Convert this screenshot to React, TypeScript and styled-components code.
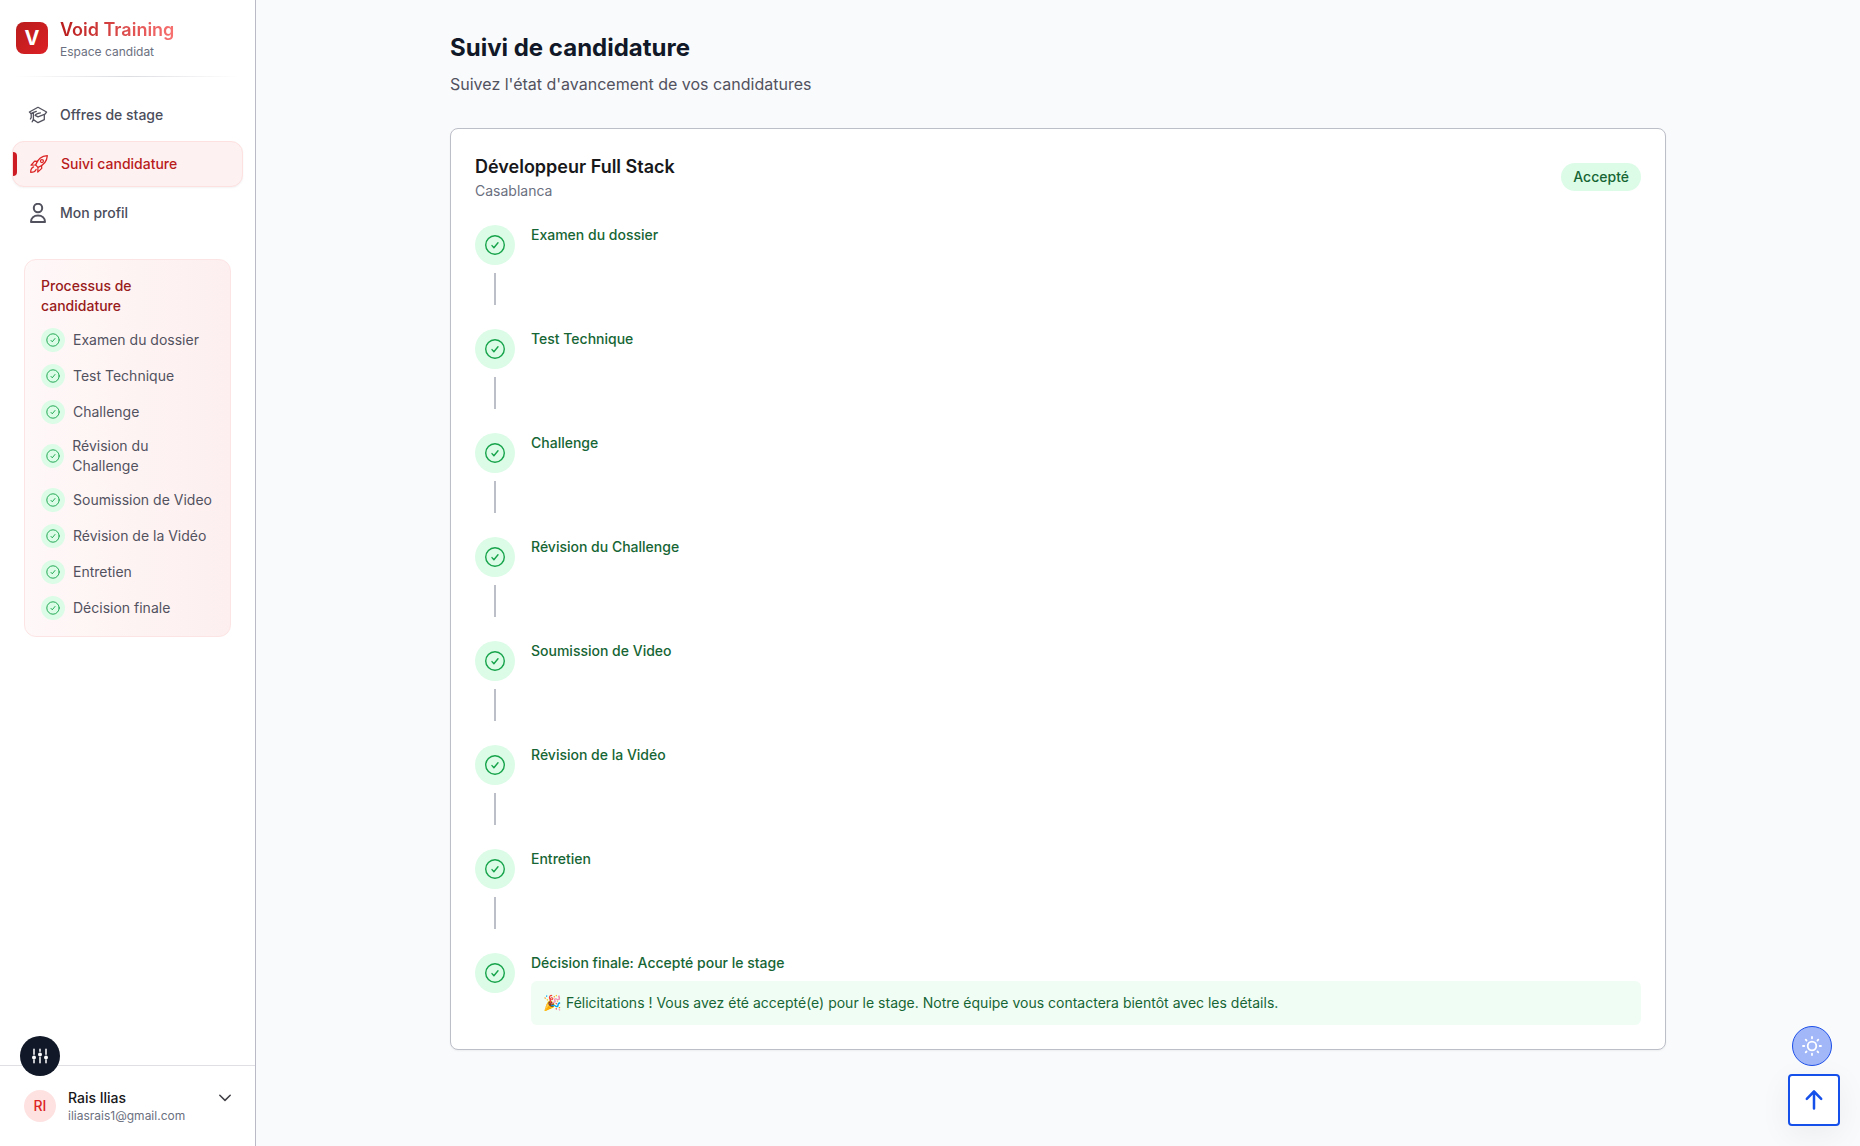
import React from "react";
import styled, { createGlobalStyle } from "styled-components";

const GlobalStyle = createGlobalStyle`
  *, *::before, *::after { box-sizing: border-box; }
  body {
    margin: 0;
    background: #f9fafb;
    color: #18181b;
    font-family: Inter, "Noto Sans", sans-serif;
    font-size: 14px;
    line-height: 20px;
  }
  h1, h2, h3, p, ul, ol { margin: 0; padding: 0; }
  ul, ol { list-style: none; }
  button { font: inherit; color: inherit; cursor: pointer; }
  svg { display: block; flex: none; }
`;

const Layout = styled.div`
  display: flex;
  min-height: 100vh;
`;

const Sidebar = styled.aside`
  display: flex;
  flex-direction: column;
  flex: none;
  width: 256px;
  height: 100vh;
  position: sticky;
  top: 0;
  background: #fff;
  border-right: 1px solid #b9bac6;
`;

const Brand = styled.header`
  display: flex;
  align-items: center;
  gap: 12px;
  height: 76px;
  padding: 0 16px;
`;

const BrandMark = styled.span`
  display: grid;
  place-items: center;
  width: 32px;
  height: 32px;
  border-radius: 8px;
  background: linear-gradient(135deg, #b91c1c, #dc2026);
  color: #fff;
  font-size: 20px;
  font-weight: 700;
`;

const BrandName = styled.p`
  width: max-content;
  font-size: 18px;
  line-height: 28px;
  font-weight: 600;
  color: transparent;
  background: linear-gradient(90deg, #b91c1c, #f87171);
  background-clip: text;
  -webkit-background-clip: text;
`;

const BrandSub = styled.p`
  font-size: 12px;
  line-height: 16px;
  color: #6b7080;
`;

const Divider = styled.hr`
  height: 1px;
  margin: 0 16px;
  border: 0;
  background: linear-gradient(90deg, transparent, #dcdde1, transparent);
`;

const Nav = styled.nav`
  display: flex;
  flex-direction: column;
  gap: 4px;
  padding: 16px 12px 0;
`;

const NavLink = styled.a<{ $active?: boolean }>`
  position: relative;
  display: flex;
  align-items: center;
  gap: 12px;
  height: ${(p) => (p.$active ? 46 : 44)}px;
  padding: 0 16px;
  border: ${(p) => (p.$active ? "1px solid #fde0e0" : "0")};
  border-radius: 12px;
  background: ${(p) => (p.$active ? "#fef1f1" : "transparent")};
  box-shadow: ${(p) => (p.$active ? "0 1px 2px rgba(0, 0, 0, 0.05)" : "none")};
  color: ${(p) => (p.$active ? "#b91c1c" : "#4b4d5b")};
  font-weight: 500;
  text-decoration: none;
  svg { color: ${(p) => (p.$active ? "#dc2626" : "#52525f")}; }
  &::before {
    content: ${(p) => (p.$active ? '""' : "none")};
    position: absolute;
    left: 0;
    width: 4px;
    height: 24px;
    border-radius: 0 4px 4px 0;
    background: #ce1c25;
  }
`;

const Process = styled.section`
  margin: 24px 24px 0;
  padding: 16px;
  border: 1px solid #fde4e4;
  border-radius: 12px;
  background: linear-gradient(90deg, #fff8f8, #fdefef);
`;

const ProcessTitle = styled.h3`
  max-width: 140px;
  margin-bottom: 12px;
  font-size: 14px;
  line-height: 20px;
  font-weight: 500;
  color: #991b1b;
`;

const ProcessList = styled.ul`
  display: flex;
  flex-direction: column;
  gap: 12px;
`;

const ProcessItem = styled.li`
  display: flex;
  align-items: center;
  gap: 8px;
  color: #52525f;
`;

const CheckDisc = styled.span<{ $size: number }>`
  display: grid;
  place-items: center;
  flex: 0 1 auto;
  width: ${(p) => p.$size}px;
  height: ${(p) => p.$size}px;
  border-radius: 50%;
  background: #dcfce7;
  color: #16a34a;
`;

const Account = styled.button`
  display: flex;
  align-items: flex-start;
  gap: 12px;
  margin-top: auto;
  padding: 16px 24px;
  border: 0;
  border-top: 1px solid #dfdfe4;
  background: transparent;
  text-align: left;
`;

const Avatar = styled.span`
  display: grid;
  place-items: center;
  width: 32px;
  height: 32px;
  margin-top: 8px;
  border-radius: 50%;
  background: #fee2e2;
  color: #dc2626;
  font-weight: 500;
`;

const AccountText = styled.span`
  display: flex;
  flex: 1;
  flex-direction: column;
  padding: 6px 0;
`;

const AccountName = styled.span`
  font-weight: 500;
  color: #18181b;
`;

const AccountMail = styled.span`
  font-size: 12px;
  line-height: 16px;
  color: #6b7080;
`;

const Chevron = styled.span`
  padding-top: 10px;
  color: #3f3f46;
`;

const Main = styled.main`
  flex: 1;
  padding: 32px 24px;
`;

const Content = styled.div`
  max-width: 1216px;
  margin: 0 auto;
`;

const PageTitle = styled.h1`
  font-size: 24px;
  line-height: 32px;
  font-weight: 700;
  color: #111827;
`;

const PageLead = styled.p`
  margin: 8px 0 32px;
  font-size: 16px;
  line-height: 24px;
  color: #52525f;
`;

const Card = styled.article`
  padding: 24px;
  border: 1px solid #bcbec8;
  border-radius: 8px;
  background: #fff;
  box-shadow: 0 1px 2px rgba(0, 0, 0, 0.05);
`;

const CardHead = styled.header`
  display: flex;
  align-items: center;
  justify-content: space-between;
  margin-bottom: 24px;
`;

const JobTitle = styled.h2`
  font-size: 18px;
  line-height: 28px;
  font-weight: 600;
  color: #18181b;
`;

const JobPlace = styled.p`
  color: #6b7080;
`;

const Status = styled.span`
  padding: 4px 12px;
  border-radius: 14px;
  background: #dcfce7;
  color: #166534;
  font-weight: 500;
`;

const Timeline = styled.ol`
  display: flex;
  flex-direction: column;
  gap: 24px;
`;

const Step = styled.li`
  display: flex;
  gap: 16px;
`;

const StepRail = styled.div`
  display: flex;
  flex-direction: column;
  align-items: center;
  gap: 8px;
`;

const StepLine = styled.span`
  width: 2px;
  height: 32px;
  background: #bcbec8;
`;

const StepBody = styled.div`
  flex: 1;
`;

const StepTitle = styled.h3`
  font-size: 14px;
  line-height: 20px;
  font-weight: 500;
  color: #166534;
`;

const Notice = styled.p`
  margin-top: 8px;
  padding: 12px;
  border-radius: 6px;
  background: #f0fdf4;
  color: #166534;
`;

const Emoji = styled.span`
  font-size: 15px;
  line-height: 16px;
`;

const ToolsButton = styled.button`
  position: fixed;
  left: 20px;
  bottom: 70px;
  display: grid;
  place-items: center;
  width: 40px;
  height: 40px;
  padding: 0;
  border: 0;
  border-radius: 50%;
  background: #111827;
  color: #fff;
`;

const FloatingActions = styled.div`
  position: fixed;
  right: 20px;
  bottom: 20px;
  display: flex;
  flex-direction: column;
  align-items: center;
  gap: 8px;
`;

const ThemeButton = styled.button`
  display: grid;
  place-items: center;
  width: 40px;
  height: 40px;
  margin-right: 4px;
  padding: 0;
  border: 1px solid #1d4fe8;
  border-radius: 50%;
  background: #a2b7f8;
  color: #fff;
`;

const TopButton = styled.button`
  display: grid;
  place-items: center;
  width: 52px;
  height: 52px;
  padding: 0;
  border: 2px solid #1650ea;
  border-radius: 4px;
  background: #fff;
  color: #1650ea;
  box-shadow: 0 8px 32px rgba(0, 0, 0, 0.06);
`;

const strokeProps = {
  fill: "none",
  stroke: "currentColor",
  strokeLinecap: "round",
  strokeLinejoin: "round",
  "aria-hidden": true,
} as const;

const CheckIcon = ({ size }: { size: number }) => (
  <svg width={size} height={size} viewBox="0 0 24 24" strokeWidth="1.4" {...strokeProps}>
    <circle cx="12" cy="12" r="9.3" />
    <path d="m9 12.6 1.900 2.100L15 9.700" />
  </svg>
);

const CapIcon = () => (
  <svg width="20" height="20" viewBox="0 0 20 20" strokeWidth="1.3" {...strokeProps}>
    <path d="M3 8.600 1.400 7 10 2.300 18.600 7 17 9.200 10 11.800 7.200 10.400C7.600 8.800 9.800 8.300 12.400 7.800" />
    <path d="M3 8.600 5 7.600 8.300 6.300M3.200 9v3.600L2.400 14M5.400 8.200v6.200L4.200 16.800M5.400 14.600 10 17.700l6.300-3V9.600" />
  </svg>
);

const RocketIcon = () => (
  <svg width="20" height="20" viewBox="0 0 24 24" strokeWidth="1.5" {...strokeProps}>
    <path d="M8 13.200C9.800 7.800 14 2.600 22 2c-.6 8-5.800 12.200-11.200 14L8 13.200Z" />
    <path d="M10.300 8.800 6.800 8.500 2.500 13.500l5.500-.3M15 13.800l.3 3.400-4.800 4.600.3-5.800M5.500 15.500C3 16.500 2 19.500 2 22c2.500 0 5.500-1 6.500-3.500" />
    <circle cx="15.500" cy="8.500" r="1.800" />
  </svg>
);

const UserIcon = () => (
  <svg width="20" height="20" viewBox="0 0 20 20" strokeWidth="2" {...strokeProps}>
    <circle cx="10" cy="5" r="4.200" />
    <path d="M3 19c0-4 3-6.500 7-6.500s7 2.500 7 6.500Z" />
  </svg>
);

const ChevronIcon = () => (
  <svg width="12" height="12" viewBox="0 0 12 12" strokeWidth="1.500" {...strokeProps}>
    <path d="m.8 3.200 5.200 5.200 5.200-5.200" />
  </svg>
);

const SlidersIcon = () => (
  <svg width="16" height="16" viewBox="0 0 16 16" strokeWidth="1.500" {...strokeProps}>
    <path d="M2 1.200v5M2 12v2.800M8 1.200v2M8 9.500v5.300M14 1.200v5M14 12v2.800" />
    <g fill="currentColor" stroke="none">
      <circle cx="2" cy="9.500" r="2" />
      <circle cx="8" cy="6.500" r="2" />
      <circle cx="14" cy="9.500" r="2" />
    </g>
  </svg>
);

const SunIcon = () => (
  <svg width="20" height="20" viewBox="0 0 20 20" strokeWidth="1.800" {...strokeProps}>
    <circle cx="10" cy="10" r="4.300" />
    <path d="M10 1v1.300M10 17.700v1.300M1 10h1.300M17.700 10h1.300M3.700 3.700l.8.800M15.500 15.500l.8.800M3.700 16.300l.8-.8M15.500 4.500l.8-.8" />
  </svg>
);

const ArrowUpIcon = () => (
  <svg width="24" height="24" viewBox="0 0 24 24" strokeWidth="2.500" {...strokeProps}>
    <path d="M12 20.500V3.500M4.800 10.800 12 3.500l7.200 7.300" />
  </svg>
);

const STEPS = [
  "Examen du dossier",
  "Test Technique",
  "Challenge",
  "Révision du Challenge",
  "Soumission de Video",
  "Révision de la Vidéo",
  "Entretien",
  "Décision finale",
];

export default function App() {
  return (
    <>
      <GlobalStyle />
      <Layout>
        <Sidebar>
          <Brand>
            <BrandMark>V</BrandMark>
            <div>
              <BrandName>Void Training</BrandName>
              <BrandSub>Espace candidat</BrandSub>
            </div>
          </Brand>
          <Divider />
          <Nav>
            <NavLink href="#offres"><CapIcon />Offres de stage</NavLink>
            <NavLink href="#suivi" $active aria-current="page"><RocketIcon />Suivi candidature</NavLink>
            <NavLink href="#profil"><UserIcon />Mon profil</NavLink>
          </Nav>
          <Process>
            <ProcessTitle>Processus de candidature</ProcessTitle>
            <ProcessList>
              {STEPS.map((step) => (
                <ProcessItem key={step}>
                  <CheckDisc $size={24}><CheckIcon size={16} /></CheckDisc>
                  {step}
                </ProcessItem>
              ))}
            </ProcessList>
          </Process>
          <Account type="button">
            <Avatar>RI</Avatar>
            <AccountText>
              <AccountName>Rais Ilias</AccountName>
              <AccountMail>iliasrais1@gmail.com</AccountMail>
            </AccountText>
            <Chevron><ChevronIcon /></Chevron>
          </Account>
        </Sidebar>
        <Main>
          <Content>
            <PageTitle>Suivi de candidature</PageTitle>
            <PageLead>Suivez l'état d'avancement de vos candidatures</PageLead>
            <Card>
              <CardHead>
                <div>
                  <JobTitle>Développeur Full Stack</JobTitle>
                  <JobPlace>Casablanca</JobPlace>
                </div>
                <Status>Accepté</Status>
              </CardHead>
              <Timeline>
                {STEPS.map((step, i) => {
                  const last = i === STEPS.length - 1;
                  return (
                    <Step key={step}>
                      <StepRail>
                        <CheckDisc $size={40}><CheckIcon size={24} /></CheckDisc>
                        {!last && <StepLine />}
                      </StepRail>
                      <StepBody>
                        <StepTitle>{last ? `${step}: Accepté pour le stage` : step}</StepTitle>
                        {last && (
                          <Notice>
                            <Emoji>🎉</Emoji> Félicitations ! Vous avez été accepté(e) pour le stage.
                            Notre équipe vous contactera bientôt avec les détails.
                          </Notice>
                        )}
                      </StepBody>
                    </Step>
                  );
                })}
              </Timeline>
            </Card>
          </Content>
        </Main>
      </Layout>
      <ToolsButton type="button" aria-label="Réglages"><SlidersIcon /></ToolsButton>
      <FloatingActions>
        <ThemeButton type="button" aria-label="Thème clair"><SunIcon /></ThemeButton>
        <TopButton type="button" aria-label="Haut de page"><ArrowUpIcon /></TopButton>
      </FloatingActions>
    </>
  );
}
